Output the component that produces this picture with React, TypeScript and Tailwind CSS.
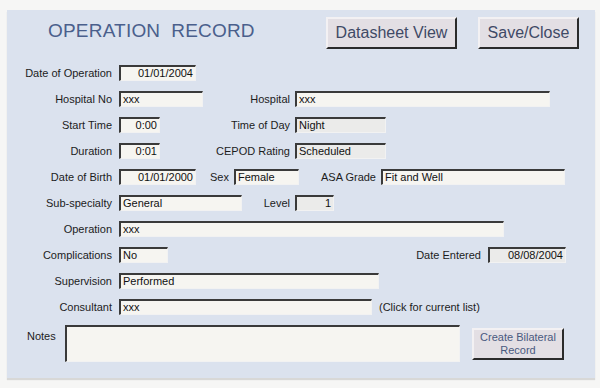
import type { ReactNode } from "react";

type BoxProps = {
  className: string;
  children?: ReactNode;
  right?: boolean;
  readOnly?: boolean;
};

// sunken Access-style text box
function Box({ className, children, right, readOnly }: BoxProps) {
  return (
    <div
      className={[
        "h-[16px] shrink-0 border-t-2 border-l-2 border-b border-r border-t-[#3a3a3a] border-l-[#3a3a3a] border-b-[#f2f2f2] border-r-[#f2f2f2] px-[2px] text-[11px] leading-[13px] text-[#111] whitespace-nowrap overflow-hidden",
        readOnly ? "bg-[#ebebea]" : "bg-[#f6f5f1]",
        right ? "text-right" : "text-left",
        className,
      ].join(" ")}
    >
      {children}
    </div>
  );
}

function Label({ className, children }: { className: string; children: ReactNode }) {
  return (
    <div className={"shrink-0 text-right text-[11px] leading-[16px] text-[#1c1c1c] whitespace-nowrap " + className}>
      {children}
    </div>
  );
}

function Row({ children }: { children: ReactNode }) {
  return <div className="flex h-[16px] items-center">{children}</div>;
}

export default function App() {
  return (
    <div className="h-[388px] w-[600px] bg-[#f6f6f5] pt-[10px] pl-[7px] font-['Liberation_Sans',Arial,sans-serif]">
      <div className="h-[368px] w-[588px] bg-[#dbe2ee] pt-[7px] shadow-[0_2px_1px_rgba(0,0,0,0.12)]">
        {/* header */}
        <div className="flex items-start">
          <h1 className="ml-[41px] mt-[3px] text-[19px] leading-[22px] tracking-[0.2px] text-[#4a5f8c]">
            OPERATION&nbsp;&nbsp;RECORD
          </h1>
          <div className="ml-auto mr-[16px] flex gap-[21px]">
            <button className="h-[32px] w-[131px] border-2 border-t-[#f3f1f3] border-l-[#f3f1f3] border-b-[#2b2b2b] border-r-[#2b2b2b] bg-[#e3dfe4] text-[16px] text-[#3f4a66]">
              Datasheet View
            </button>
            <button className="h-[32px] w-[101px] border-2 border-t-[#f3f1f3] border-l-[#f3f1f3] border-b-[#2b2b2b] border-r-[#2b2b2b] bg-[#e3dfe4] text-[16px] text-[#3f4a66]">
              Save/Close
            </button>
          </div>
        </div>

        {/* fields */}
        <div className="mt-[16px] flex flex-col gap-[10px]">
          <Row>
            <Label className="w-[112px] pr-[7px]">Date of Operation</Label>
            <Box className="w-[77px]" right>01/01/2004</Box>
          </Row>
          <Row>
            <Label className="w-[112px] pr-[7px]">Hospital No</Label>
            <Box className="w-[84px]">xxx</Box>
            <Label className="w-[92px] pr-[5px]">Hospital</Label>
            <Box className="w-[255px]">xxx</Box>
          </Row>
          <Row>
            <Label className="w-[112px] pr-[7px]">Start Time</Label>
            <Box className="w-[41px]" right>0:00</Box>
            <Label className="w-[135px] pr-[5px]">Time of Day</Label>
            <Box className="w-[91px]" readOnly>Night</Box>
          </Row>
          <Row>
            <Label className="w-[112px] pr-[7px]">Duration</Label>
            <Box className="w-[41px]" right>0:01</Box>
            <Label className="w-[135px] pr-[5px]">CEPOD Rating</Label>
            <Box className="w-[91px]" readOnly>Scheduled</Box>
          </Row>
          <Row>
            <Label className="w-[112px] pr-[7px]">Date of Birth</Label>
            <Box className="w-[77px]" right>01/01/2000</Box>
            <Label className="w-[38px] pr-[5px]">Sex</Label>
            <Box className="w-[65px]">Female</Box>
            <Label className="w-[82px] pr-[5px]">ASA Grade</Label>
            <Box className="w-[184px]">Fit and Well</Box>
          </Row>
          <Row>
            <Label className="w-[112px] pr-[7px]">Sub-specialty</Label>
            <Box className="w-[123px]">General</Box>
            <Label className="w-[53px] pr-[5px]">Level</Label>
            <Box className="w-[39px]" right readOnly>1</Box>
          </Row>
          <Row>
            <Label className="w-[112px] pr-[7px]">Operation</Label>
            <Box className="w-[385px]">xxx</Box>
          </Row>
          <Row>
            <Label className="w-[112px] pr-[7px]">Complications</Label>
            <Box className="w-[49px]">No</Box>
            <Label className="w-[320px] pr-[7px]">Date Entered</Label>
            <Box className="w-[78px]" right readOnly>08/08/2004</Box>
          </Row>
          <Row>
            <Label className="w-[112px] pr-[7px]">Supervision</Label>
            <Box className="w-[260px]">Performed</Box>
          </Row>
          <Row>
            <Label className="w-[112px] pr-[7px]">Consultant</Label>
            <Box className="w-[253px]">xxx</Box>
            <span className="ml-[7px] text-[11px] leading-[16px] text-[#1c1c1c]">(Click for current list)</span>
          </Row>
        </div>

        {/* notes */}
        <div className="mt-[10px] flex items-start">
          <div className="ml-[20px] mt-[3px] w-[38px] text-[11px] leading-[16px] text-[#1c1c1c]">Notes</div>
          <div className="h-[37px] w-[395px] border-t-2 border-l-2 border-b border-r border-t-[#3a3a3a] border-l-[#3a3a3a] border-b-[#f2f2f2] border-r-[#f2f2f2] bg-[#f6f5f1]" />
          <button className="ml-[12px] mt-[3px] h-[32px] w-[92px] border-2 border-t-[#f3f1f3] border-l-[#f3f1f3] border-b-[#2b2b2b] border-r-[#2b2b2b] bg-[#e3dfe4] text-[11px] leading-[13px] text-[#4a5a80]">
            Create Bilateral
            <br />
            Record
          </button>
        </div>
      </div>
    </div>
  );
}
